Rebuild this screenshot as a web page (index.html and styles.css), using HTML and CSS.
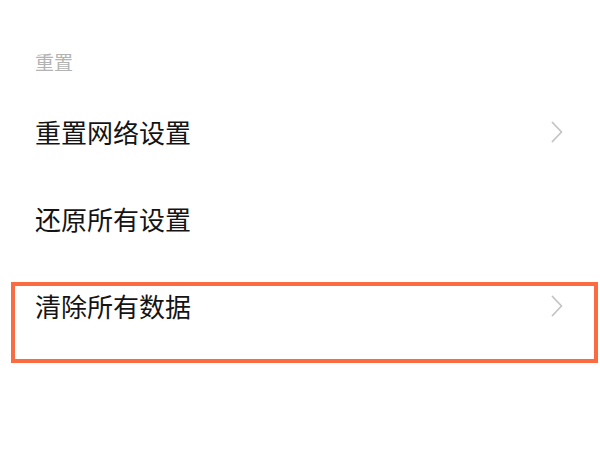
FILE: index.html
```html
<!DOCTYPE html>
<html lang="zh">
<head>
<meta charset="utf-8">
<link rel="stylesheet" href="styles.css">
</head>
<body>
<div class="page">
  <div class="section-title">重置</div>
  <div class="row">
    <span class="label">重置网络设置</span>
    <svg class="chev" width="12" height="22" viewBox="0 0 12 22"><polyline points="1.5,1.5 10.5,11 1.5,20.5" fill="none" stroke="#c4c4c4" stroke-width="1.8" stroke-linecap="round" stroke-linejoin="round"/></svg>
  </div>
  <div class="row">
    <span class="label">还原所有设置</span>
  </div>
  <div class="row">
    <span class="label">清除所有数据</span>
    <svg class="chev" width="12" height="22" viewBox="0 0 12 22"><polyline points="1.5,1.5 10.5,11 1.5,20.5" fill="none" stroke="#c4c4c4" stroke-width="1.8" stroke-linecap="round" stroke-linejoin="round"/></svg>
    <div class="highlight"></div>
  </div>
</div>
</body>
</html>
```
FILE: styles.css
```css
html, body {
  margin: 0;
  padding: 0;
  background: #ffffff;
}
body {
  font-family: "Noto Sans CJK SC", "Noto Sans", sans-serif;
  width: 600px;
  height: 450px;
  overflow: hidden;
}
.page {
  display: flex;
  flex-direction: column;
}
.section-title {
  height: 88px;
  box-sizing: border-box;
  padding: 48px 0 0 35px;
  font-size: 19px;
  line-height: 28px;
  color: #b3b3b3;
}
.row {
  position: relative;
  height: 87px;
  display: flex;
  align-items: center;
  justify-content: space-between;
  padding: 0 37px 0 35px;
}
.label {
  font-size: 26px;
  line-height: 30px;
  color: #141414;
}
.chev {
  display: block;
}
.highlight {
  position: absolute;
  left: 11px;
  top: 20px;
  width: 579px;
  height: 73px;
  border: 4px solid #fa6b42;
}
```
